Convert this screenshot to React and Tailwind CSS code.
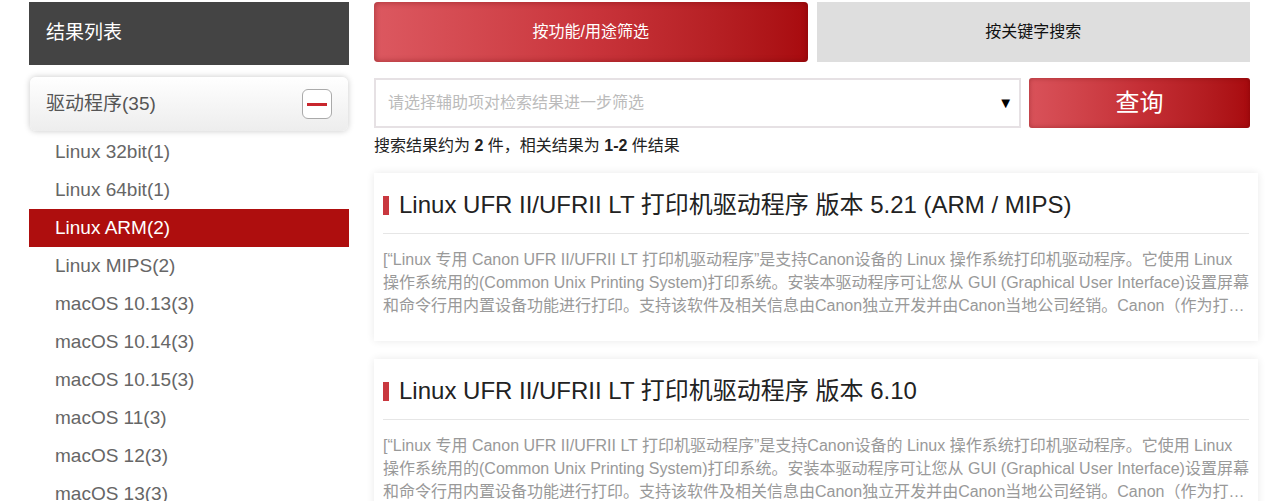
const categories = [
    {name:'Linux 32bit', count:1},
    {name:'Linux 64bit', count:1},
    {name:'Linux ARM', count:2},
    {name:'Linux MIPS', count:2},
    {name:'macOS 10.13', count:3},
    {name:'macOS 10.14', count:3},
    {name:'macOS 10.15', count:3},
    {name:'macOS 11', count:3},
    {name:'macOS 12', count:3},
    {name:'macOS 13', count:3},
];

const desc = '[“Linux 专用 Canon UFR II/UFRII LT 打印机驱动程序”是支持Canon设备的 Linux 操作系统打印机驱动程序。它使用 Linux 操作系统用的(Common Unix Printing System)打印系统。安装本驱动程序可让您从 GUI (Graphical User Interface)设置屏幕和命令行用内置设备功能进行打印。支持该软件及相关信息由Canon独立开发并由Canon当地公司经销。Canon（作为打印机制造商）提供的驱动程序……]';

const results = [
    {title:'Linux UFR II/UFRII LT 打印机驱动程序 版本 5.21 (ARM / MIPS)'},
    {title:'Linux UFR II/UFRII LT 打印机驱动程序 版本 6.10'},
];

const ResultCard = ({title}) => (
    <div className="bg-white px-[9px] pt-[12px] pb-[24px] shadow-[0_0_8px_rgba(0,0,0,0.09)]">
        <h2 className="flex items-center text-[24px] leading-[40px] text-[#222] pb-[8px] border-b border-[#e6e6e6]">
            <span className="inline-block w-[6px] h-[19px] bg-[#c9383f] mr-[10px]"></span>
            {title}
        </h2>
        <p className="mt-[14px] text-[16px] leading-[23px] text-[#999] line-clamp-3">{desc}</p>
    </div>
);

export default function App(){
    const selected = 'Linux ARM';
    return(
        <div className="w-[1268px] h-[501px] overflow-hidden bg-white pt-[2px] pl-[29px] flex gap-[25px] font-['Liberation_Sans','Noto_Sans_CJK_SC',sans-serif]">
            <aside className="w-[320px] shrink-0">
                <div className="h-[63px] bg-[#444] text-white text-[19px] flex items-center pl-[17px]">结果列表</div>
                <div className="mt-[12px] mx-[1px] h-[54px] rounded-md bg-gradient-to-b from-white to-[#ededed] shadow-[0_0_6px_rgba(0,0,0,0.22)] flex items-center justify-between pl-[16px] pr-[16px]">
                    <span className="text-[19px] text-[#555]">驱动程序(35)</span>
                    <button className="w-[30px] h-[30px] rounded-md border border-[#aaa] bg-white flex items-center justify-center">
                        <span className="block w-[20px] h-[3px] bg-[#c8262d]"></span>
                    </button>
                </div>
                <ul className="mt-[2px]">
                    {categories.map(c => (
                        <li key={c.name} className={`h-[38px] flex items-center pl-[26px] text-[19px] ${c.name === selected ? 'bg-[#ae0e0e] text-white' : 'text-[#666]'}`}>
                            {c.name}({c.count})
                        </li>
                    ))}
                </ul>
            </aside>

            <main className="w-[884px] shrink-0">
                <div className="w-[876px] flex gap-[9px]">
                    <button className="flex-1 h-[60px] rounded-[4px] text-white text-[16px] bg-gradient-to-r from-[#dc5860] via-[#c9343b] to-[#a80a0e] shadow-[inset_0_0_6px_rgba(90,0,0,0.45)]">按功能/用途筛选</button>
                    <button className="flex-1 h-[60px] text-[#111] text-[16px] bg-[#dedede]">按关键字搜索</button>
                </div>

                <div className="w-[876px] mt-[16px] flex gap-[8px]">
                    <div className="w-[647px] h-[50px] border-2 border-[#e6e1e4] flex items-center justify-between pl-[12px] pr-[6px]">
                        <span className="text-[16px] text-[#bbb]">请选择辅助项对检索结果进一步筛选</span>
                        <span className="text-[15px] text-black">▼</span>
                    </div>
                    <button className="flex-1 h-[50px] rounded-[3px] text-white text-[24px] bg-gradient-to-r from-[#d9525a] via-[#c52f36] to-[#a80a0e] shadow-[inset_0_0_5px_rgba(90,0,0,0.4)]">查询</button>
                </div>

                <p className="mt-[8px] text-[16px] leading-[20px] text-[#222]">
                    搜索结果约为 <b>2</b> 件，相关结果为 <b>1-2</b> 件结果
                </p>

                <div className="mt-[17px] flex flex-col gap-[18px]">
                    {results.map(r => <ResultCard key={r.title} title={r.title} />)}
                </div>
            </main>
        </div>
    )
}
